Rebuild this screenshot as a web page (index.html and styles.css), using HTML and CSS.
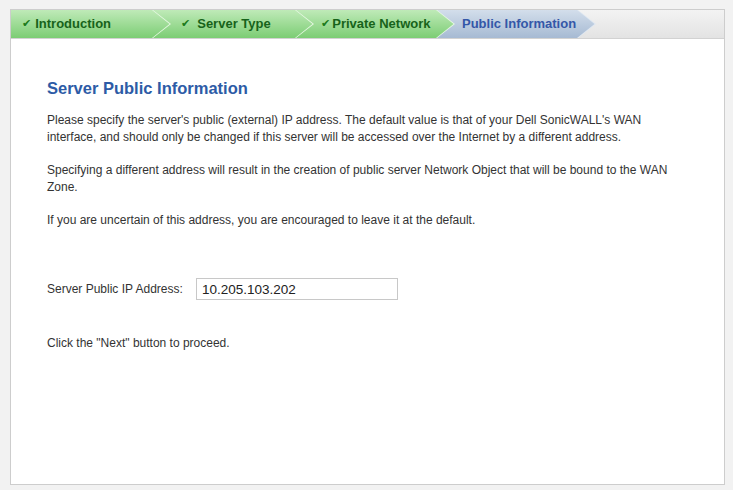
FILE: index.html
```html
<!DOCTYPE html>
<html lang="en">

<head>
  <meta charset="UTF-8">
  <title>Server Public Information</title>
  <link rel="stylesheet" href="styles.css">
</head>

<body>

  <div class="panel">
    <div class="steps">
      <div class="step done step-intro"><span class="check">✔</span>Introduction</div>
      <div class="step done step-type"><span class="check">✔</span>Server Type</div>
      <div class="step done step-private"><span class="check">✔</span>Private Network</div>
      <div class="step current step-public">Public Information</div>
    </div>

    <div class="content">
      <h2>Server Public Information</h2>
      <p>Please specify the server's public (external) IP address. The default value is that of your Dell SonicWALL's WAN interface, and should only be changed if this server will be accessed over the Internet by a different address.</p>
      <p>Specifying a different address will result in the creation of public server Network Object that will be bound to the WAN Zone.</p>
      <p>If you are uncertain of this address, you are encouraged to leave it at the default.</p>

      <div class="field">
        <label for="publicIp">Server Public IP Address:</label>
        <input type="text" id="publicIp" value="10.205.103.202">
      </div>

      <p class="hint">Click the "Next" button to proceed.</p>
    </div>
  </div>

</body>

</html>
```

FILE: styles.css
```css
body {
  margin: 0;
  padding: 9px 0 0 10px;
  background-color: #f2f2f2;
  font-family: "Liberation Sans", Arial, sans-serif;
  font-size: 12px;
  color: #333;
}

.panel {
  width: 713px;
  height: 474px;
  border: 1px solid #cdcdcd;
  background-color: #ffffff;
  display: flex;
  flex-direction: column;
}

.steps {
  display: flex;
  height: 28px;
  border-bottom: 1px solid #d2d2d2;
  background: linear-gradient(#f3f3f3, #e3e3e3);
}

.step {
  position: relative;
  display: flex;
  align-items: center;
  height: 26px;
  padding-bottom: 2px;
  margin-left: -18px;
  font-size: 13px;
  font-weight: bold;
  clip-path: polygon(0 0, calc(100% - 18px) 0, 100% 50%, calc(100% - 18px) 100%, 0 100%);
}

.step::before {
  content: "";
  position: absolute;
  inset: 0;
  z-index: -1;
  clip-path: polygon(0 0, calc(100% - 19px) 0, calc(100% - 1.5px) 50%, calc(100% - 19px) 100%, 0 100%);
}

.step.done {
  color: #17631a;
  background-color: #e6f8e2;
}

.step.done::before {
  background: linear-gradient(#bfeab8, #7ccd74);
}

.step.current {
  color: #3457a8;
  background-color: #dfe8f2;
}

.step.current::before {
  background: linear-gradient(#d3deeb, #a6bad3);
}

.check {
  font-family: "DejaVu Sans", sans-serif;
  font-size: 11px;
  color: #1b7a1b;
  margin-right: 4px;
}

.step-intro {
  margin-left: 0;
  width: 149px;
  padding-left: 11px;
  z-index: 4;
}

.step-type {
  width: 133px;
  padding-left: 28px;
  z-index: 3;
}

.step-type .check {
  margin-right: 7px;
}

.step-private {
  width: 134px;
  padding-left: 25px;
  z-index: 2;
}

.step-private .check {
  margin-right: 2px;
}

.step-public {
  width: 134px;
  padding-left: 25px;
  z-index: 1;
}

.content {
  padding: 39px 36px 0 36px;
}

h2 {
  margin: 0 0 14px 0;
  font-size: 16.5px;
  line-height: 20px;
  color: #2d5ba6;
}

p {
  margin: 0 0 16px 0;
  line-height: 17px;
}

.field {
  display: flex;
  align-items: center;
  margin-top: 49px;
}

.field label {
  width: 149px;
}

.field input {
  width: 190px;
  height: 20px;
  padding: 0 5px;
  border: 1px solid #c8c8c8;
  font-family: "Liberation Sans", Arial, sans-serif;
  font-size: 13.5px;
  color: #222;
  outline: none;
}

.hint {
  margin-top: 35px;
}
```
